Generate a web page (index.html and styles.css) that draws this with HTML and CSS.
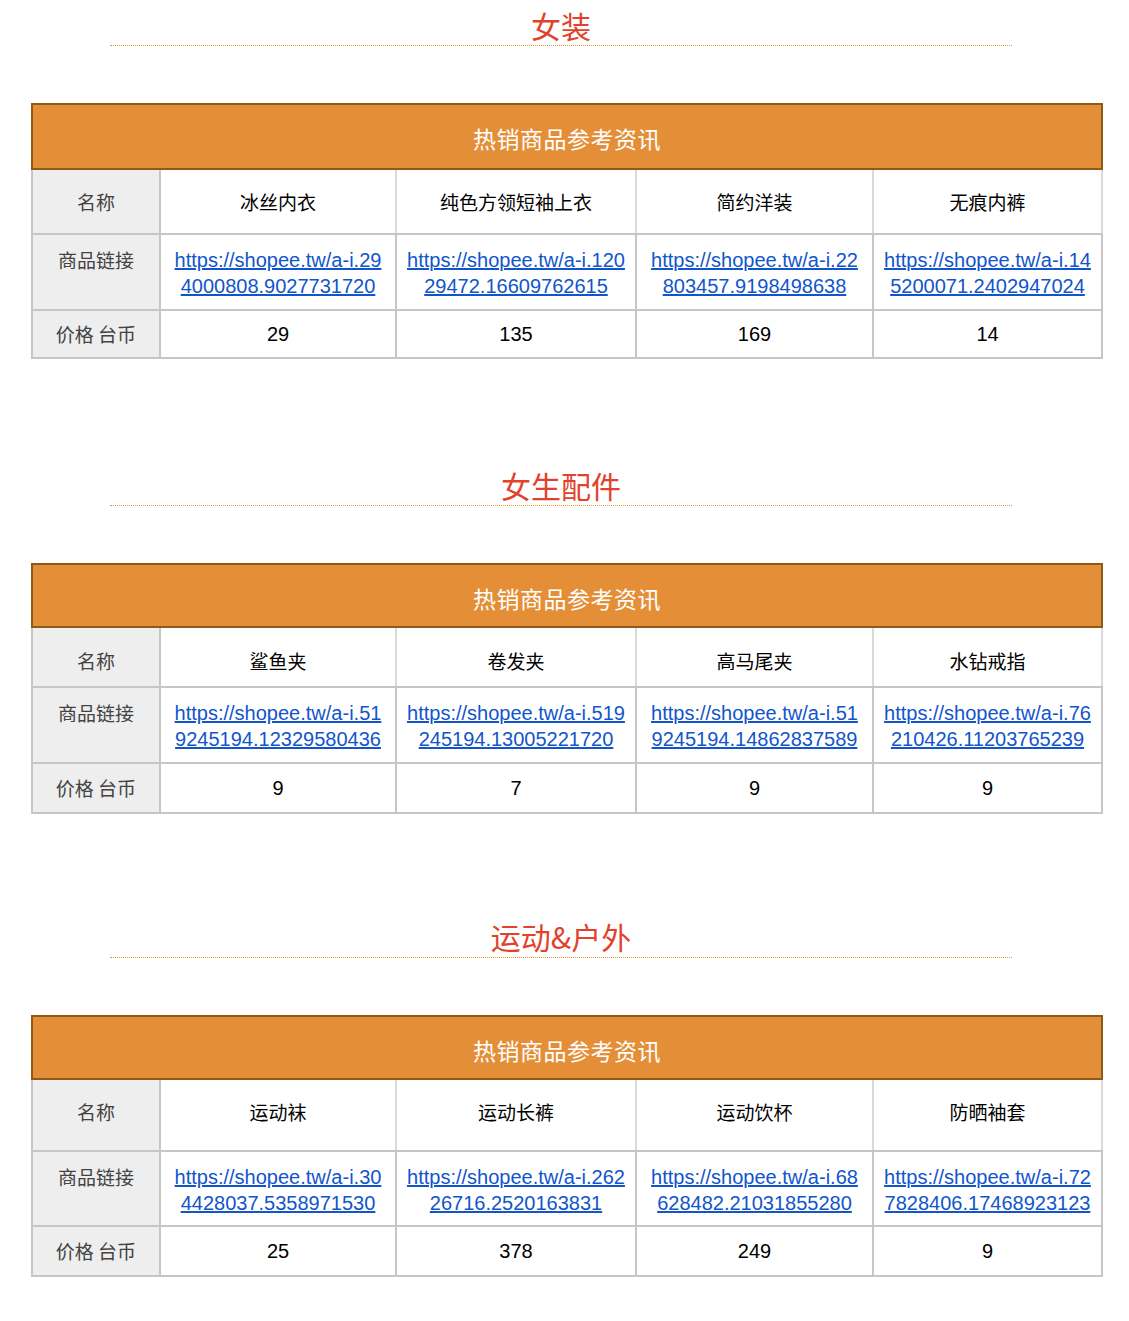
FILE: index.html
```html
<!DOCTYPE html>
<html lang="zh-CN">
<head>
<meta charset="utf-8">
<title>热销商品参考资讯</title>
<link rel="stylesheet" href="styles.css">
</head>
<body>
<main class="page">

  <section class="section section--first">
    <h2 class="section-title">女装</h2>
    <table class="sheet sheet--a">
      <colgroup><col class="c0"><col class="c1"><col class="c2"><col class="c3"><col class="c4"></colgroup>
      <tr class="row-head"><th colspan="5">热销商品参考资讯</th></tr>
      <tr class="row-name"><td class="label">名称</td><td>冰丝内衣</td><td>纯色方领短袖上衣</td><td>简约洋装</td><td>无痕内裤</td></tr>
      <tr class="row-link"><td class="label">商品链接</td>
        <td><a href="#">https://shopee.tw/a-i.29<br>4000808.9027731720</a></td>
        <td><a href="#">https://shopee.tw/a-i.120<br>29472.16609762615</a></td>
        <td><a href="#">https://shopee.tw/a-i.22<br>803457.9198498638</a></td>
        <td><a href="#">https://shopee.tw/a-i.14<br>5200071.2402947024</a></td></tr>
      <tr class="row-price"><td class="label">价格 台币</td><td>29</td><td>135</td><td>169</td><td>14</td></tr>
    </table>
  </section>

  <section class="section">
    <h2 class="section-title">女生配件</h2>
    <table class="sheet sheet--b">
      <colgroup><col class="c0"><col class="c1"><col class="c2"><col class="c3"><col class="c4"></colgroup>
      <tr class="row-head"><th colspan="5">热销商品参考资讯</th></tr>
      <tr class="row-name"><td class="label">名称</td><td>鲨鱼夹</td><td>卷发夹</td><td>高马尾夹</td><td>水钻戒指</td></tr>
      <tr class="row-link"><td class="label">商品链接</td>
        <td><a href="#">https://shopee.tw/a-i.51<br>9245194.12329580436</a></td>
        <td><a href="#">https://shopee.tw/a-i.519<br>245194.13005221720</a></td>
        <td><a href="#">https://shopee.tw/a-i.51<br>9245194.14862837589</a></td>
        <td><a href="#">https://shopee.tw/a-i.76<br>210426.11203765239</a></td></tr>
      <tr class="row-price"><td class="label">价格 台币</td><td>9</td><td>7</td><td>9</td><td>9</td></tr>
    </table>
  </section>

  <section class="section section--third">
    <h2 class="section-title section-title--low">运动&amp;户外</h2>
    <table class="sheet sheet--c">
      <colgroup><col class="c0"><col class="c1"><col class="c2"><col class="c3"><col class="c4"></colgroup>
      <tr class="row-head"><th colspan="5">热销商品参考资讯</th></tr>
      <tr class="row-name"><td class="label">名称</td><td>运动袜</td><td>运动长裤</td><td>运动饮杯</td><td>防晒袖套</td></tr>
      <tr class="row-link"><td class="label">商品链接</td>
        <td><a href="#">https://shopee.tw/a-i.30<br>4428037.5358971530</a></td>
        <td><a href="#">https://shopee.tw/a-i.262<br>26716.2520163831</a></td>
        <td><a href="#">https://shopee.tw/a-i.68<br>628482.21031855280</a></td>
        <td><a href="#">https://shopee.tw/a-i.72<br>7828406.17468923123</a></td></tr>
      <tr class="row-price"><td class="label">价格 台币</td><td>25</td><td>378</td><td>249</td><td>9</td></tr>
    </table>
  </section>

</main>
</body>
</html>
```

FILE: styles.css
```css
html, body {
  margin: 0;
  padding: 0;
  background: #ffffff;
}

body {
  font-family: "Liberation Sans", "Noto Sans CJK SC", Arial, sans-serif;
  color: #000;
}

.page {
  padding: 0 27px 0 31px;
}

.section {
  padding-top: 110px;
}

.section--first {
  padding-top: 9px;
}

.section--third {
  padding-top: 107px;
}

.section-title {
  margin: 0 90px 57px 79px;
  height: 36px;
  line-height: 32px;
  font-family: "Noto Sans CJK SC", sans-serif;
  font-size: 30px;
  font-weight: normal;
  color: #e2412b;
  text-align: center;
  border-bottom: 1px dotted #f29a22;
}

.section-title--low {
  line-height: 30px;
}

.sheet {
  width: 1070px;
  border-collapse: collapse;
  table-layout: fixed;
  font-size: 20px;
}

.c0 { width: 128px; }
.c1 { width: 236px; }
.c2 { width: 240px; }
.c3 { width: 237px; }
.c4 { width: 229px; }

.sheet td {
  border: 2px solid #c6c6c6;
  text-align: center;
  padding: 0 6px;
}

.row-head th {
  background: #e48f38;
  border: 2px solid #8e5a18;
  color: #ffffff;
  font-family: "Noto Sans CJK SC", sans-serif;
  font-size: 23px;
  font-weight: normal;
  letter-spacing: 0.5px;
  vertical-align: top;
  padding: 17px 0 0 0;
  line-height: 32px;
}

.label {
  background: #eeeeee;
  color: #434343;
  font-family: "Noto Sans CJK SC", sans-serif;
  font-size: 19px;
}

.row-name td {
  vertical-align: top;
  padding-top: 19px;
  line-height: 26px;
  font-family: "Noto Sans CJK SC", sans-serif;
  font-size: 19px;
}

.row-name td:not(.label) {
  font-weight: normal;
  color: #000;
  border-left-color: #d9d9d9;
  border-right-color: #d9d9d9;
}

.row-link td {
  vertical-align: top;
  padding-top: 12px;
  line-height: 26px;
}

.row-link a {
  color: #1155cc;
  text-decoration: underline;
  white-space: nowrap;
}

.row-price td {
  vertical-align: middle;
  line-height: 26px;
}

.sheet--a .row-head th { height: 46px; }
.sheet--a .row-name td { height: 44px; }
.sheet--a .row-link td { height: 62px; }
.sheet--a .row-price td { height: 46px; }

.sheet--b .row-head th { height: 44px; }
.sheet--b .row-name td { height: 38px; padding-top: 20px; }
.sheet--b .row-link td { height: 62px; }
.sheet--b .row-price td { height: 48px; }

.sheet--c .row-head th { height: 44px; }
.sheet--c .row-name td { height: 51px; }
.sheet--c .row-link td { height: 61px; }
.sheet--c .row-price td { height: 48px; }
```
